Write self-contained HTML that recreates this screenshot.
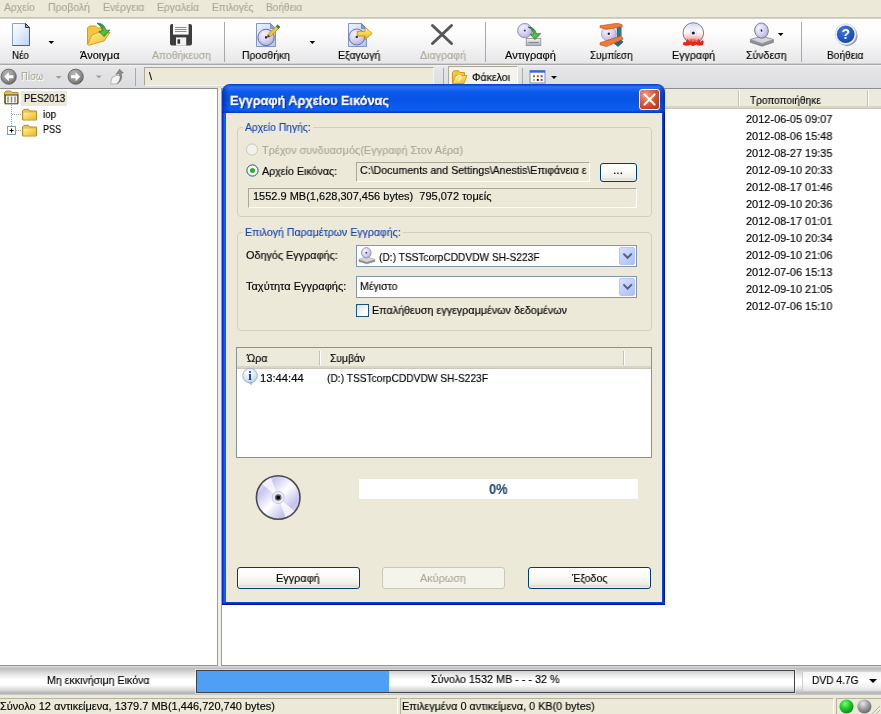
<!DOCTYPE html>
<html lang="el">
<head>
<meta charset="utf-8">
<title>Εγγραφή Αρχείου Εικόνας</title>
<style>
*{box-sizing:border-box;margin:0;padding:0}
html,body{width:881px;height:714px;overflow:hidden;background:#ece9d8}
body{font-family:"Liberation Sans","DejaVu Sans",sans-serif;font-size:11px;color:#000;position:relative}
.a{position:absolute}
.t{position:absolute;white-space:pre;will-change:transform;-webkit-text-stroke:.15px}
svg{position:absolute;overflow:visible;will-change:transform}
#menubar{left:0;top:0;width:881px;height:17px;background:#ece9d8}
#tbline{left:0;top:17px;width:881px;height:2px;background:linear-gradient(#d8d5c6 0,#b9b6a8 50%,#f0efea 100%)}
#toolbar{left:0;top:19px;width:881px;height:46px;background:linear-gradient(#ffffff 0,#fdfdfd 30%,#f3f3f4 62%,#e7e7e9 96%,#a9a9a9 98%,#a9a9a9 100%)}
.sep{position:absolute;width:1px;background:#a9a9a6}
.arr{position:absolute;width:0;height:0;border-left:3px solid transparent;border-right:3px solid transparent;border-top:3px solid #000}
#addr{left:0;top:65px;width:881px;height:23px;background:linear-gradient(#f1f1f2 0,#e5e5e7 12%,#dfe0e2 70%,#dcdde0 100%)}
#tree{left:0;top:88px;width:218px;height:578px;background:#fff;border-right:1px solid #9d9d92;border-top:1px solid #8e8e8e;border-bottom:1px solid #8a96a2}
#list{left:221px;top:88px;width:660px;height:578px;background:#fff;border-left:1px solid #9d9d92;border-top:1px solid #8e8e8e;border-bottom:1px solid #8a96a2}
#listhead{left:222px;top:89px;width:659px;height:20px;background:#ebeadb;border-bottom:1px solid #cbc7b8;box-shadow:inset 0 -2px 0 #d9d5c6}
#capbar{left:0;top:666px;width:881px;height:29px;background:linear-gradient(#dcdcdc 0,#bdbdbd 9%,#e4e4e4 28%,#ffffff 46%,#ffffff 64%,#dadada 82%,#b2b2b2 94%,#d0d0cc 100%)}
#status{left:0;top:695px;width:881px;height:19px;background:#ece9d8}
.sunk{position:absolute;border:1px solid;border-color:#808080 #fff #fff #808080;background:#fff}
#dlg{left:222px;top:84px;width:443px;height:521px;background:#ece9d8;border-radius:8px 8px 0 0;overflow:hidden}
#dlg .bl{left:0;top:29px;width:4px;height:492px;background:linear-gradient(90deg,#0019cf 0,#0831d9 25%,#166aee 50%,#0855dd 100%)}
#dlg .br{left:440px;top:29px;width:3px;height:492px;background:linear-gradient(90deg,#0a50dc 0,#0a3cd2 35%,#0019b4 70%,#00138c 100%)}
#dlg .bb{left:0;top:518px;width:443px;height:3px;background:linear-gradient(#0a50dc 0,#0a3cd2 35%,#0019b4 70%,#00138c 100%)}
#title{left:0;top:0;width:443px;height:29px;background:linear-gradient(#0a3cc0 0,#0a4fe0 4%,#2c74f5 10%,#1c68f1 18%,#0a5aeb 28%,#0853e3 50%,#0a5cf0 80%,#0a5ef4 90%,#0848cc 96%,#0638b0 100%)}
#title .sh{left:0;top:0;width:443px;height:29px;background:linear-gradient(90deg,rgba(0,20,140,.55) 0,rgba(0,20,140,0) 1.5%,rgba(0,20,140,0) 98.5%,rgba(0,20,140,.55) 100%)}
#close{left:417px;top:5px;width:21px;height:21px;border:1px solid #fff;border-radius:3px;background:radial-gradient(circle at 30% 25%,#eba183 0,#dd5f3b 40%,#c43d18 80%,#b5340f 100%)}
.grp{position:absolute;border:1px solid #d0d0bf;border-radius:4px}
.inp{position:absolute;background:#fff;border:1px solid #8496ad}
.ro{position:absolute;background:#ece9d8;border:1px solid;border-color:#aca899 #fff #fff #aca899}
.btn{position:absolute;border:1px solid #003c74;border-radius:3px;background:linear-gradient(#ffffff 0,#fbfbf8 40%,#f0efe7 80%,#d8d3c6 100%);box-shadow:inset 0 0 0 1px rgba(255,255,255,.6)}
.btn.dis{border-color:#c9c7ba;background:#f5f4ea;box-shadow:none}
.combo{position:absolute;right:1px;top:1px;width:16px;bottom:1px;border-radius:2px;background:linear-gradient(135deg,#d6e1fd,#c1d1fc 50%,#aabcf6);border:1px solid #b4c6fa}
.lh{position:absolute;background:#ebeadb;border-bottom:1px solid #cbc7b8;box-shadow:inset 0 -2px 0 #d9d5c6}
</style>
</head>
<body>
<div id="menubar" class="a">
<span class="t" style="left:4.4px;top:0.69px;line-height:13px;color:#aca899;transform:scaleX(0.9378);transform-origin:0 0;">Αρχείο</span>
<span class="t" style="left:48px;top:0.69px;line-height:13px;color:#aca899;transform:scaleX(0.9508);transform-origin:0 0;">Προβολή</span>
<span class="t" style="left:102.8px;top:0.69px;line-height:13px;color:#aca899;transform:scaleX(0.9579);transform-origin:0 0;">Ενέργεια</span>
<span class="t" style="left:157px;top:0.69px;line-height:13px;color:#aca899;transform:scaleX(0.9402);transform-origin:0 0;">Εργαλεία</span>
<span class="t" style="left:211.8px;top:0.69px;line-height:13px;color:#aca899;transform:scaleX(0.9297);transform-origin:0 0;">Επιλογές</span>
<span class="t" style="left:266px;top:0.69px;line-height:13px;color:#aca899;transform:scaleX(0.9186);transform-origin:0 0;">Βοήθεια</span>
</div>
<div id="tbline" class="a"></div>
<div id="toolbar" class="a"></div>
<span class="t" style="left:12px;top:48.69px;line-height:13px;transform:scaleX(0.8962);transform-origin:0 0;">Νέο</span>
<span class="t" style="left:80.4px;top:48.69px;line-height:13px;transform:scaleX(1.0049);transform-origin:0 0;">Άνοιγμα</span>
<span class="t" style="left:152px;top:48.69px;line-height:13px;color:#aca899;transform:scaleX(0.9447);transform-origin:0 0;">Αποθήκευση</span>
<span class="t" style="left:242px;top:48.69px;line-height:13px;transform:scaleX(0.9418);transform-origin:0 0;">Προσθήκη</span>
<span class="t" style="left:337.7px;top:48.69px;line-height:13px;transform:scaleX(0.9603);transform-origin:0 0;">Εξαγωγή</span>
<span class="t" style="left:420px;top:48.69px;line-height:13px;color:#aca899;transform:scaleX(0.9678);transform-origin:0 0;">Διαγραφή</span>
<span class="t" style="left:505px;top:48.69px;line-height:13px;">Αντιγραφή</span>
<span class="t" style="left:590.4px;top:48.69px;line-height:13px;transform:scaleX(0.9064);transform-origin:0 0;">Συμπίεση</span>
<span class="t" style="left:672.4px;top:48.69px;line-height:13px;transform:scaleX(0.9770);transform-origin:0 0;">Εγγραφή</span>
<span class="t" style="left:745.8px;top:48.69px;line-height:13px;transform:scaleX(0.9609);transform-origin:0 0;">Σύνδεση</span>
<span class="t" style="left:827px;top:48.69px;line-height:13px;transform:scaleX(0.9262);transform-origin:0 0;">Βοήθεια</span>
<div class="sep" style="left:224px;top:22px;height:40px"></div>
<div class="sep" style="left:485px;top:22px;height:40px"></div>
<div class="sep" style="left:801px;top:22px;height:40px"></div>
<svg class="a" style="left:0;top:0" width="881" height="66" viewBox="0 0 881 66"><defs>
<linearGradient id="gPage" x1="0" y1="0" x2="1" y2="1"><stop offset="0" stop-color="#ffffff"/><stop offset=".45" stop-color="#e4eefc"/><stop offset="1" stop-color="#b9d2f4"/></linearGradient>
<linearGradient id="gPage2" x1="0" y1="0" x2="1" y2="1"><stop offset="0" stop-color="#eef3fd"/><stop offset="1" stop-color="#b4c8ee"/></linearGradient>
<linearGradient id="gFold" x1="0" y1="0" x2="1" y2="1"><stop offset="0" stop-color="#fdf0a0"/><stop offset=".5" stop-color="#f7d555"/><stop offset="1" stop-color="#e8b530"/></linearGradient>
<linearGradient id="gGreen" x1="0" y1="0" x2="1" y2="1"><stop offset="0" stop-color="#1f7a2a"/><stop offset=".6" stop-color="#4fc845"/><stop offset="1" stop-color="#2f9a30"/></linearGradient>
<linearGradient id="gYel" x1="0" y1="0" x2="0" y2="1"><stop offset="0" stop-color="#fff08a"/><stop offset=".55" stop-color="#fbd23c"/><stop offset="1" stop-color="#e6a51e"/></linearGradient>
<radialGradient id="gDisc" cx=".4" cy=".35" r=".75"><stop offset="0" stop-color="#fbfaff"/><stop offset=".5" stop-color="#d6d2f4"/><stop offset="1" stop-color="#a9a6de"/></radialGradient>
<linearGradient id="gDiscB" x1="0" y1="0" x2="0" y2="1"><stop offset="0" stop-color="#d9d2f2"/><stop offset=".45" stop-color="#ffffff"/><stop offset=".7" stop-color="#f9c9c0"/><stop offset="1" stop-color="#ee5a48"/></linearGradient>
<linearGradient id="gDrive" x1="0" y1="0" x2="0" y2="1"><stop offset="0" stop-color="#f2f2f2"/><stop offset="1" stop-color="#a9adb3"/></linearGradient>
<radialGradient id="gBack" cx=".4" cy=".3" r=".8"><stop offset="0" stop-color="#b9b9b9"/><stop offset=".6" stop-color="#8c8c8c"/><stop offset="1" stop-color="#5e5e5e"/></radialGradient>
<radialGradient id="gHelp" cx=".4" cy=".3" r=".8"><stop offset="0" stop-color="#4a7be0"/><stop offset=".6" stop-color="#2255c0"/><stop offset="1" stop-color="#173d9a"/></radialGradient>
<radialGradient id="gBallG" cx=".4" cy=".3" r=".7"><stop offset="0" stop-color="#7dfb7a"/><stop offset=".5" stop-color="#1fcf2a"/><stop offset="1" stop-color="#0b8a14"/></radialGradient>
<radialGradient id="gBallS" cx=".4" cy=".3" r=".7"><stop offset="0" stop-color="#e8e8e8"/><stop offset=".5" stop-color="#a4a4a4"/><stop offset="1" stop-color="#6a6a6a"/></radialGradient>
<linearGradient id="gCD" x1="0" y1="0" x2="1" y2="1"><stop offset="0" stop-color="#f4f2ff"/><stop offset=".25" stop-color="#c9c6f0"/><stop offset=".5" stop-color="#ffffff"/><stop offset=".75" stop-color="#c4c2ee"/><stop offset="1" stop-color="#e9e7fb"/></linearGradient>
<radialGradient id="gInfo" cx=".4" cy=".3" r=".8"><stop offset="0" stop-color="#ffffff"/><stop offset=".6" stop-color="#d4e6f8"/><stop offset="1" stop-color="#a9c8ea"/></radialGradient>
</defs><path d="M12.5 23.5H25.5L29.5 27.5V45.5H12.5Z" fill="url(#gPage)" stroke="#8aa0c4" stroke-width="1"/><path d="M29.5 27.5V45.5H12.5" fill="none" stroke="#5a5f6a" stroke-width="1"/><path d="M25.5 23.5V27.5H29.5Z" fill="#9db4d8" stroke="#2e3238" stroke-width="1" stroke-linejoin="round"/><path d="M87.5 44V28L89.5 26H95.5L97.5 28H104.5V33" fill="#f2c63e" stroke="#cf9a22" stroke-width="1"/><path d="M87.5 44.5L92 35L98 32.5H110L104 41L89 45.2Z" fill="url(#gFold)" stroke="#d6a226" stroke-width="1" stroke-linejoin="round"/><path d="M97 23.2C102 23 105 26 105.8 30.2L109.8 30.2L104.2 36.6L98.8 31.4L102.4 30.8C102 27.6 100.4 25.4 97 23.2Z" fill="url(#gGreen)" stroke="#1d6b25" stroke-width=".7" stroke-linejoin="round"/><rect x="170" y="24" width="22" height="21.6" rx="2" fill="#3d3d3d"/><rect x="173" y="24" width="15.6" height="10.6" fill="#f7f7f7"/><path d="M175 27.5h11.5M175 29.5h11.5M175 31.5h11.5" stroke="#8d8d8d" stroke-width="1"/><rect x="176" y="37.4" width="10.2" height="8.2" fill="#f2f2f2"/><rect x="177.5" y="39.3" width="2.6" height="4.4" fill="#333"/><path d="M256.5 23.5H270.5L275.5 28.5V46.5H256.5Z" fill="url(#gPage2)" stroke="#7f97c8" stroke-width="1"/><path d="M270.5 23.5V28.5H275.5Z" fill="#8aa2d8" stroke="#6f88c0" stroke-width=".8"/><circle cx="266.1" cy="37.4" r="8.2" fill="url(#gDisc)" stroke="#5f6192" stroke-width="0.9"/><circle cx="266.1" cy="37.4" r="2.71" fill="#f6f4ff" stroke="#c4c0e4" stroke-width=".5"/><circle cx="266.1" cy="37.4" r="1.31" fill="#2a2a55"/><path d="M268 34.6L276.2 26.2L278.6 28.4L270.4 36.6L267.2 37.4Z" fill="#f4c62c" stroke="#a8801a" stroke-width=".6"/><path d="M276.2 26.2L277.6 24.8L280 27L278.6 28.4Z" fill="#3d8a3a" stroke="#2a5a2a" stroke-width=".5"/><path d="M268 34.6L270.4 36.6L267.2 37.4Z" fill="#5a4420"/><path d="M348.5 23.5H361.5L366.5 28.5V46.5H348.5Z" fill="url(#gPage2)" stroke="#7f97c8" stroke-width="1"/><path d="M361.5 23.5V28.5H366.5Z" fill="#7f9ad2" stroke="#5f7ab8" stroke-width=".8"/><circle cx="356.8" cy="37" r="8" fill="url(#gDisc)" stroke="#6a6c9c" stroke-width="0.9"/><circle cx="356.8" cy="37" r="2.64" fill="#f6f4ff" stroke="#c4c0e4" stroke-width=".5"/><circle cx="356.8" cy="37" r="1.28" fill="#2a2a55"/><path d="M357.3 31.4H365V27.2L372.2 33.5L365 39.6V36H357.3Z" fill="url(#gYel)" stroke="#c08a1a" stroke-width=".8" stroke-linejoin="round"/><path d="M432.5 25.5L451.5 43.5M451.5 25.5L432.5 43.5" stroke="#585858" stroke-width="3" stroke-linecap="round"/><circle cx="524.8" cy="30.6" r="7.2" fill="url(#gDisc)" stroke="#8b8da6" stroke-width="0.9"/><circle cx="524.8" cy="30.6" r="2.38" fill="#f6f4ff" stroke="#c4c0e4" stroke-width=".5"/><circle cx="524.8" cy="30.6" r="1.15" fill="#3a3f7a"/><rect x="526.2" y="38.6" width="14.6" height="7" fill="url(#gDrive)" stroke="#8d9096" stroke-width=".8"/><path d="M528.5 42.6H538.6" stroke="#7c8088" stroke-width="1"/><path d="M528 27C532.6 27 535.4 29.6 536.2 33.8L540.6 33.6L535 39.6L530.2 34.2L533.4 34C532.8 30.6 531.2 28.6 528 27Z" fill="url(#gGreen)" stroke="#1d6b25" stroke-width=".7" stroke-linejoin="round"/><path d="M617 26H621.2V40.5H617Z" fill="#2a7a9a" stroke="#1d566e" stroke-width=".5"/><path d="M614 43.2L621 39.8L623.2 42L618 46.6Z" fill="#1f6a8c" stroke="#164a62" stroke-width=".5"/><circle cx="608.8" cy="33.8" r="7.4" fill="url(#gDisc)" stroke="#b0a8c8" stroke-width="0.9"/><circle cx="608.8" cy="33.8" r="2.44" fill="#f6f4ff" stroke="#c4c0e4" stroke-width=".5"/><circle cx="608.8" cy="33.8" r="1.18" fill="#222"/><path d="M600 25.8L617.5 23.2L622.2 24.8V26.8L606 29.4L600 27.6Z" fill="#ef7a3a" stroke="#b8481a" stroke-width=".6" stroke-linejoin="round"/><path d="M600 42.8L620.5 36L622.6 37.6V39.4L606.5 46.6L600 44.8Z" fill="#ef7a3a" stroke="#b8481a" stroke-width=".6" stroke-linejoin="round"/><circle cx="693.3" cy="33" r="10.3" fill="url(#gDiscB)" stroke="#6a7094" stroke-width="0.9"/><circle cx="693.3" cy="33" r="3.40" fill="#f6f4ff" stroke="#c4c0e4" stroke-width=".5"/><circle cx="693.3" cy="33" r="1.60" fill="#2a1a2a"/><path d="M682.6 44.6L684 41.4L685.6 42.4L687.4 39L689.6 41.6L691 38.6L693 42.6L694.6 39.6L696.6 42.6L698.6 38.8L700.4 41.8L702.4 40.2L703.8 41.6L703 45Q698.6 46.8 696.2 44.6Q693.4 47.4 690.4 44.8Q686.6 47 682.6 44.6Z" fill="#e8241c"/><path d="M688 41.5Q693 36 698.4 41.5Z" fill="#f06a50" opacity=".7"/><path d="M750.4 39.4L762.4 36.2L773.4 39.6V42.4L762 46.2L750.4 42.4Z" fill="#8f9297" stroke="#6d7075" stroke-width=".6" stroke-linejoin="round"/><path d="M750.4 39.4L762.4 36.2L773.4 39.6L762 43.4Z" fill="#d4d6d9" stroke="#8a8d92" stroke-width=".5"/><g transform="rotate(-12 761.5 30.6)"><ellipse cx="761.5" cy="30.6" rx="6.8" ry="7.6" fill="url(#gDisc)" stroke="#777a86" stroke-width=".9"/><ellipse cx="761.5" cy="30.6" rx="2.2" ry="2.6" fill="#f4f2ff" stroke="#c4c0e4" stroke-width=".4"/><ellipse cx="761.5" cy="30.6" rx="1" ry="1.3" fill="#33386a"/></g><circle cx="847" cy="35.6" r="10.6" fill="#7a7c78" opacity=".75"/><circle cx="845.7" cy="34.3" r="10.6" fill="#e9f3ff" stroke="#b8d0ee" stroke-width=".6"/><circle cx="845.7" cy="34.3" r="8.8" fill="url(#gHelp)"/><text x="845.7" y="39.3" text-anchor="middle" font-family="Liberation Sans, sans-serif" font-weight="bold" font-size="14" fill="#fff">?</text><path d="M48.5 41h5.6l-2.8 3z" fill="#000"/><path d="M309.6 41h5.6l-2.8 3z" fill="#000"/><path d="M777.9 33h5.6l-2.8 3z" fill="#000"/></svg>
<div id="addr" class="a"></div>
<span class="t" style="left:21px;top:70.19px;line-height:13px;color:#aca899;transform:scaleX(0.8616);transform-origin:0 0;text-shadow:1px 1px 0 #fff;">Πίσω</span>
<div class="sep" style="left:135px;top:68px;height:18px"></div>
<div class="ro" style="left:144px;top:67px;width:290px;height:19px;border-color:#aca899 #f5f4ee #f5f4ee #aca899"></div>
<span class="t" style="left:149px;top:69.69px;line-height:13px;">\</span>
<div class="sep" style="left:443px;top:68px;height:18px"></div>
<div class="a" style="left:448px;top:66px;width:70px;height:21px;border:1px solid;border-color:#aca899 #fff #fff #aca899;background:#f3f2ec"></div>
<span class="t" style="left:472px;top:70.69px;line-height:13px;transform:scaleX(0.9635);transform-origin:0 0;">Φάκελοι</span>
<div class="sep" style="left:522px;top:68px;height:18px"></div>
<svg class="a" style="left:0;top:64px" width="881" height="26" viewBox="0 64 881 26"><circle cx="8.7" cy="76.7" r="7.6" fill="url(#gBack)" stroke="#5a5a5a" stroke-width=".8"/><path d="M4.2 76.7L8.8 72.2V75.2H13.4V78.2H8.8V81.2Z" fill="#fff"/><path d="M55.6 76h6l-3 3z" fill="#a3a194"/><circle cx="75.7" cy="76.7" r="7.6" fill="url(#gBack)" stroke="#5a5a5a" stroke-width=".8"/><path d="M80.2 76.7L75.6 72.2V75.2H71V78.2H75.6V81.2Z" fill="#fff"/><path d="M95.8 75.4h6l-3 3z" fill="#a3a194"/><path d="M110.5 84L112 77.5L116 75.5H121L119.5 82L116 84Z" fill="#f4f4f2" stroke="#a8a8a4" stroke-width=".8" stroke-linejoin="round"/><path d="M117.2 83.6C120.2 80.8 121 77.4 119.2 73.4L116 74.4L119.6 69.2L123.4 73L121 73.2C122.6 77.8 121.2 81.4 117.2 83.6Z" fill="#8c8c8c" stroke="#6a6a6a" stroke-width=".6" stroke-linejoin="round"/><path d="M452.5 83V72.5L454 70.8H458.5L460 72.5H464.5V75" fill="#f2c63e" stroke="#cf9a22" stroke-width="1"/><path d="M452.5 83.5L455.5 75.5H467L464 83.5Z" fill="url(#gFold)" stroke="#d6a226" stroke-width="1" stroke-linejoin="round"/><path d="M456 78.2C457.2 74.8 461 74.6 461 77.2C461 79 458.4 79 458.6 81" fill="none" stroke="#fff8d0" stroke-width="1.2"/><rect x="530" y="70.5" width="15" height="12.5" fill="#fdfdfd" stroke="#7d8fb8" stroke-width="1"/><rect x="530" y="70.5" width="15" height="2.2" fill="#3a6ad0"/><rect x="533" y="75.2" width="2" height="2" fill="#4a9a3a"/><rect x="536.8" y="75.2" width="2" height="2" fill="#d84a3a"/><rect x="540.6" y="75.2" width="2" height="2" fill="#3a5ad0"/><rect x="533" y="78.9" width="2" height="2" fill="#d8b03a"/><rect x="536.8" y="78.9" width="2" height="2" fill="#222"/><rect x="540.6" y="78.9" width="2" height="2" fill="#8a3ad0"/><path d="M551 76h6l-3 3z" fill="#000"/></svg>
<div class="a" style="left:218px;top:88px;width:4px;height:578px;background:#eeeeea"></div>
<div id="tree" class="a"></div>
<div class="a" style="left:21px;top:91px;width:46px;height:15px;background:#ece9d8"></div>
<span class="t" style="left:23.7px;top:91.69px;line-height:13px;transform:scaleX(0.8885);transform-origin:0 0;">PES2013</span>
<span class="t" style="left:42.5px;top:107.69px;line-height:13px;transform:scaleX(0.8919);transform-origin:0 0;">iop</span>
<span class="t" style="left:42.5px;top:123.19px;line-height:13px;transform:scaleX(0.8221);transform-origin:0 0;">PSS</span>
<svg class="a" style="left:0;top:89px" width="218" height="60" viewBox="0 89 218 60"><path d="M11.5 105V131" stroke="#9a9a9a" stroke-width="1" stroke-dasharray="1 1"/><path d="M12 114.5H22" stroke="#9a9a9a" stroke-width="1" stroke-dasharray="1 1"/><path d="M16 130.5H22" stroke="#9a9a9a" stroke-width="1" stroke-dasharray="1 1"/><path d="M4.5 103V92.6L6 91H10.5L12 92.6H18V103Z" fill="#e9c251" stroke="#a88a2a" stroke-width="1" stroke-linejoin="round"/><rect x="5.2" y="95" width="12.6" height="8.8" fill="#f8f8f4" stroke="#3a3a3a" stroke-width="1"/><path d="M8 96.5V102.5M11.5 96.5V102.5M15 96.5V102.5" stroke="#8a8a7a" stroke-width="1.4"/><path d="M22.5 120.0V111.0L24 109.3H28.5L30 111.0H36.5V120.0Z" fill="#e9c251" stroke="#b8902a" stroke-width="1" stroke-linejoin="round"/><path d="M23.5 119.5V112.7H36V119.5Z" fill="url(#gFold)"/><path d="M22.5 136.0V127.0L24 125.3H28.5L30 127.0H36.5V136.0Z" fill="#e9c251" stroke="#b8902a" stroke-width="1" stroke-linejoin="round"/><path d="M23.5 135.5V128.7H36V135.5Z" fill="url(#gFold)"/><rect x="7.5" y="126.5" width="8" height="8" fill="#fff" stroke="#8a9aae" stroke-width="1"/><path d="M9.5 130.5h4M11.5 128.5v4" stroke="#000" stroke-width="1"/></svg>
<div id="list" class="a"></div>
<div id="listhead" class="a"></div>
<div class="sep" style="left:738px;top:91px;height:15px;background:#c5c2b2;box-shadow:1px 0 0 #fff"></div>
<div class="sep" style="left:867px;top:91px;height:15px;background:#c5c2b2;box-shadow:1px 0 0 #fff"></div>
<span class="t" style="left:750px;top:93.69px;line-height:13px;transform:scaleX(0.9171);transform-origin:0 0;">Τροποποιήθηκε</span>
<span class="t" style="left:745.8px;top:112.69px;line-height:13px;transform:scaleX(0.9947);transform-origin:0 0;">2012-06-05 09:07</span>
<span class="t" style="left:745.8px;top:129.69px;line-height:13px;transform:scaleX(0.9947);transform-origin:0 0;">2012-08-06 15:48</span>
<span class="t" style="left:745.8px;top:146.69px;line-height:13px;transform:scaleX(0.9947);transform-origin:0 0;">2012-08-27 19:35</span>
<span class="t" style="left:745.8px;top:163.69px;line-height:13px;transform:scaleX(0.9947);transform-origin:0 0;">2012-09-10 20:33</span>
<span class="t" style="left:745.8px;top:180.69px;line-height:13px;transform:scaleX(0.9947);transform-origin:0 0;">2012-08-17 01:46</span>
<span class="t" style="left:745.8px;top:197.69px;line-height:13px;transform:scaleX(0.9947);transform-origin:0 0;">2012-09-10 20:36</span>
<span class="t" style="left:745.8px;top:214.69px;line-height:13px;transform:scaleX(0.9947);transform-origin:0 0;">2012-08-17 01:01</span>
<span class="t" style="left:745.8px;top:231.69px;line-height:13px;transform:scaleX(0.9947);transform-origin:0 0;">2012-09-10 20:34</span>
<span class="t" style="left:745.8px;top:248.69px;line-height:13px;transform:scaleX(0.9947);transform-origin:0 0;">2012-09-10 21:06</span>
<span class="t" style="left:745.8px;top:265.69px;line-height:13px;transform:scaleX(0.9947);transform-origin:0 0;">2012-07-06 15:13</span>
<span class="t" style="left:745.8px;top:282.69px;line-height:13px;transform:scaleX(0.9947);transform-origin:0 0;">2012-09-10 21:05</span>
<span class="t" style="left:745.8px;top:299.69px;line-height:13px;transform:scaleX(0.9947);transform-origin:0 0;">2012-07-06 15:10</span>
<div id="capbar" class="a"></div>
<span class="t" style="left:47px;top:673.69px;line-height:13px;transform:scaleX(0.9654);transform-origin:0 0;">Μη εκκινήσιμη Εικόνα</span>
<div class="a" style="left:196px;top:670px;width:599px;height:23px;border:1px solid #3f4348;box-shadow:0 0 0 1px rgba(255,255,255,.45)"></div>
<div class="a" style="left:197px;top:671px;width:192px;height:21px;background:#4f9ff6"></div>
<span class="t" style="left:431.2px;top:673.19px;line-height:13px;transform:scaleX(0.9813);transform-origin:0 0;">Σύνολο 1532 MB - - - 32 %</span>
<div class="a" style="left:802px;top:671px;width:80px;height:21px;border:1px solid;border-color:#d4d4d4 #fff #c4c4c4 #cfcfcf;background:linear-gradient(#f4f4f4,#ffffff 45%,#f2f2f2 75%,#dedede)"></div>
<span class="t" style="left:811.5px;top:674.19px;line-height:13px;transform:scaleX(0.9274);transform-origin:0 0;">DVD 4.7G</span>
<div class="arr" style="left:869px;top:679px;border-left-width:4px;border-right-width:4px;border-top-width:4px"></div>
<div id="status" class="a"></div>
<div class="a" style="left:-1px;top:698px;width:399px;height:17px;border:1px solid;border-color:#b5b2a2 #fff #fff #b5b2a2"></div>
<div class="a" style="left:400px;top:698px;width:434px;height:17px;border:1px solid;border-color:#b5b2a2 #fff #fff #b5b2a2"></div>
<div class="a" style="left:836px;top:698px;width:46px;height:17px;border:1px solid;border-color:#b5b2a2 #fff #fff #b5b2a2"></div>
<span class="t" style="left:0px;top:699.69px;line-height:13px;">Σύνολο 12 αντικείμενα, 1379.7 MB(1,446,720,740 bytes)</span>
<span class="t" style="left:401.8px;top:699.69px;line-height:13px;transform:scaleX(0.9833);transform-origin:0 0;">Επιλεγμένα 0 αντικείμενα, 0 KB(0 bytes)</span>
<svg class="a" style="left:830px;top:696px" width="51" height="18" viewBox="830 696 51 18"><circle cx="846.5" cy="706.5" r="7" fill="url(#gBallG)"/><circle cx="864.4" cy="706.5" r="7" fill="url(#gBallS)"/><path d="M880 706L872 714M880 710L876 714" stroke="#b8b4a4" stroke-width="1"/></svg>
<div id="dlg" class="a">
<div id="title" class="a"><div class="sh a"></div></div>
<div class="bl a"></div><div class="br a"></div><div class="bb a"></div>
<span class="t" style="left:8px;top:8.80px;line-height:15px;font-size:13px;font-weight:bold;color:#fff;transform:scaleX(0.9792);transform-origin:0 0;text-shadow:1px 1px 0 #0a1883;-webkit-text-stroke:.3px;">Εγγραφή Αρχείου Εικόνας</span>
<div id="close" class="a"></div>
<svg class="a" style="left:417px;top:5px" width="21" height="21" viewBox="0 0 21 21"><path d="M5.5 5.5L15.5 15.5M15.5 5.5L5.5 15.5" stroke="#fff" stroke-width="2.2" stroke-linecap="round"/></svg>
<div class="grp" style="left:15px;top:43px;width:415px;height:90px;"></div>
<div class="a" style="left:21px;top:38px;width:70px;height:12px;background:#ece9d8"></div>
<span class="t" style="left:23px;top:36.69px;line-height:13px;color:#1a44b4;transform:scaleX(0.9401);transform-origin:0 0;">Αρχείο Πηγής:</span>
<span class="t" style="left:40px;top:60.19px;line-height:13px;color:#aca899;transform:scaleX(0.9884);transform-origin:0 0;">Τρέχον συνδυασμός(Εγγραφή Στον Αέρα)</span>
<span class="t" style="left:40px;top:80.69px;line-height:13px;transform:scaleX(0.9693);transform-origin:0 0;">Αρχείο Εικόνας:</span>
<div class="ro" style="left:134px;top:78px;width:234px;height:20px;"></div>
<span class="t" style="left:138px;top:79.69px;line-height:13px;transform:scaleX(0.9674);transform-origin:0 0;">C:\Documents and Settings\Anestis\Επιφάνεια ε</span>
<div class="btn" style="left:378px;top:79px;width:37px;height:19px;"></div>
<span class="t" style="left:391px;top:79.69px;line-height:13px;transform:scaleX(1.0903);transform-origin:0 0;">...</span>
<div class="ro" style="left:26px;top:104px;width:389px;height:20px;"></div>
<span class="t" style="left:30.5px;top:105.69px;line-height:13px;">1552.9 MB(1,628,307,456 bytes)  795,072 τομείς</span>
<div class="grp" style="left:15px;top:148px;width:415px;height:99px;"></div>
<div class="a" style="left:21px;top:143px;width:160px;height:12px;background:#ece9d8"></div>
<span class="t" style="left:23px;top:141.69px;line-height:13px;color:#1a44b4;transform:scaleX(0.9616);transform-origin:0 0;">Επιλογή Παραμέτρων Εγγραφής:</span>
<span class="t" style="left:23.75px;top:164.69px;line-height:13px;transform:scaleX(0.9829);transform-origin:0 0;">Οδηγός Εγγραφής:</span>
<div class="inp" style="left:134px;top:161px;width:281px;height:22px;"><div class="combo"></div></div>
<span class="t" style="left:157px;top:166.69px;line-height:13px;transform:scaleX(0.9257);transform-origin:0 0;">(D:) TSSTcorpCDDVDW SH-S223F</span>
<span class="t" style="left:23.75px;top:195.69px;line-height:13px;">Ταχύτητα Εγγραφής:</span>
<div class="inp" style="left:134px;top:192px;width:281px;height:22px;"><div class="combo"></div></div>
<span class="t" style="left:137.5px;top:196.19px;line-height:13px;transform:scaleX(0.9588);transform-origin:0 0;">Μέγιστο</span>
<div class="inp" style="left:134px;top:220px;width:13px;height:13px;border-color:#1c5180;background:linear-gradient(135deg,#dcdcd7,#fff 70%)"></div>
<span class="t" style="left:150px;top:220.19px;line-height:13px;transform:scaleX(0.9799);transform-origin:0 0;">Επαλήθευση εγγεγραμμένων δεδομένων</span>
<div class="inp" style="left:14px;top:263px;width:416px;height:111px;border-color:#86919e"></div>
<div class="lh" style="left:15px;top:264px;width:414px;height:21px;"></div>
<div class="sep" style="left:97px;top:267px;height:14px;background:#c5c2b2;box-shadow:1px 0 0 #fff"></div>
<div class="sep" style="left:401px;top:267px;height:14px;background:#c5c2b2;box-shadow:1px 0 0 #fff"></div>
<span class="t" style="left:25px;top:268.19px;line-height:13px;transform:scaleX(0.9806);transform-origin:0 0;">Ώρα</span>
<span class="t" style="left:108px;top:268.19px;line-height:13px;transform:scaleX(0.9372);transform-origin:0 0;">Συμβάν</span>
<span class="t" style="left:37.5px;top:287.69px;line-height:13px;transform:scaleX(1.0215);transform-origin:0 0;">13:44:44</span>
<span class="t" style="left:104.5px;top:287.69px;line-height:13px;transform:scaleX(0.9285);transform-origin:0 0;">(D:) TSSTcorpCDDVDW SH-S223F</span>
<div class="a" style="left:137px;top:395px;width:279px;height:20px;background:#fff"></div>
<span class="t" style="left:266.7px;top:397.15px;line-height:16px;font-size:14px;font-weight:bold;color:#2c4c7c;transform:scaleX(0.9192);transform-origin:0 0;">0%</span>
<div class="btn" style="left:15px;top:483px;width:123px;height:22px;"></div>
<span class="t" style="left:53.75px;top:488.19px;line-height:13px;transform:scaleX(0.9894);transform-origin:0 0;">Εγγραφή</span>
<div class="btn dis" style="left:160px;top:483px;width:123px;height:22px;"></div>
<span class="t" style="left:198px;top:488.19px;line-height:13px;color:#aca899;transform:scaleX(0.9869);transform-origin:0 0;">Ακύρωση</span>
<div class="btn" style="left:306px;top:483px;width:123px;height:22px;"></div>
<span class="t" style="left:349.5px;top:488.19px;line-height:13px;transform:scaleX(0.9615);transform-origin:0 0;">Έξοδος</span>
<svg class="a" style="left:0;top:0" width="443" height="521" viewBox="222 84 443 521"><circle cx="252" cy="149.5" r="5.6" fill="#f3f2ea" stroke="#c9c7ba" stroke-width="1"/><circle cx="252.5" cy="170.5" r="5.6" fill="#fbfbf8" stroke="#1c5180" stroke-width="1"/><circle cx="252.5" cy="170.5" r="2.5" fill="#2fae2a"/><path d="M623.4 253.6L627.6 257.8L631.8 253.6" fill="none" stroke="#4d6185" stroke-width="2"/><path d="M623.4 284.4L627.6 288.59999999999997L631.8 284.4" fill="none" stroke="#4d6185" stroke-width="2"/><path d="M359 259.4L366.8 256.8L374.8 259.4V261.4L366.8 263.8L359 261.4Z" fill="#8f9297" stroke="#777" stroke-width=".5"/><path d="M359 259.4L366.8 256.8L374.8 259.4L366.8 262Z" fill="#d4d6d9"/><ellipse cx="366.3" cy="252.8" rx="4.8" ry="5.2" fill="url(#gDisc)" stroke="#8a8ca0" stroke-width=".8"/><circle cx="366.3" cy="252.8" r="1" fill="#444a7a"/><path d="M248.2 382L251.4 384.6L252.4 381.6Z" fill="#c4daf2" stroke="#7f9cc0" stroke-width=".7"/><circle cx="250" cy="375.6" r="7.3" fill="url(#gInfo)" stroke="#8aa6c8" stroke-width=".8"/><text x="250" y="380.2" text-anchor="middle" font-family="Liberation Serif, serif" font-weight="bold" font-size="12.5" fill="#1a2f66">i</text><circle cx="278.2" cy="497.5" r="21.8" fill="url(#gCD)" stroke="#4a4a4e" stroke-width="1.6"/><path d="M278.2 497.5L262 484A21 21 0 0 1 271 478Z" fill="#ffffff" opacity=".75"/><path d="M278.2 497.5L294.5 511A21 21 0 0 1 285.5 517Z" fill="#ffffff" opacity=".75"/><circle cx="278.2" cy="497.5" r="6" fill="#ecebfa" stroke="#b8b6de" stroke-width=".8"/><circle cx="278.2" cy="497.5" r="3.3" fill="#6a6a78"/><circle cx="278.2" cy="497.5" r="1.9" fill="#0a0a0a"/></svg>
</div>
</body>
</html>
